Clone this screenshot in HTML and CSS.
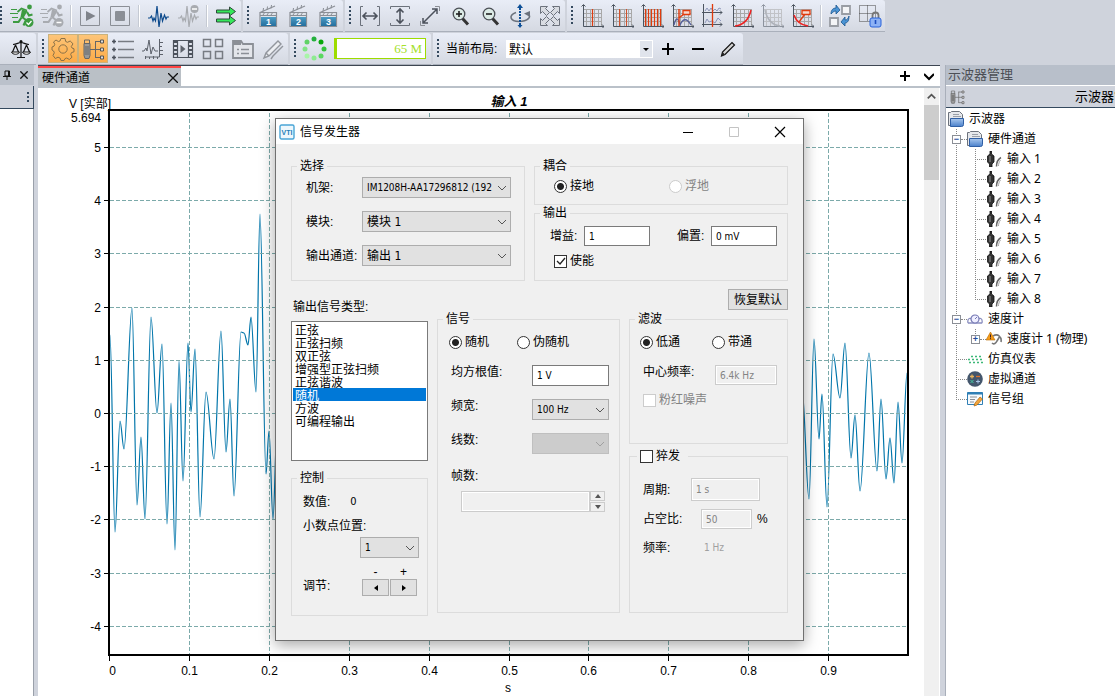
FILE: index.html
```html
<!DOCTYPE html>
<html lang="zh-CN">
<head>
<meta charset="utf-8">
<title>信号发生器</title>
<link rel="stylesheet" href="styles.css">
</head>
<body>
<svg class="sprite" aria-hidden="true">
  <defs>
    <linearGradient id="blue" x2="0" y2="1"><stop offset="0" stop-color="#4d9cc4"/><stop offset="1" stop-color="#246f9e"/></linearGradient>
    <linearGradient id="folder" x2="0" y2="1"><stop offset="0" stop-color="#a9c8ee"/><stop offset="1" stop-color="#4a80cb"/></linearGradient>
  </defs>
  <symbol id="i-runner" viewBox="0 0 24 24">
    <circle cx="19.500" cy="3" r="2.400" fill="currentColor"/>
    <path d="M17 6.500l-5.500-2-4 3.500" fill="none" stroke="currentColor" stroke-width="1.800"/>
    <path d="M12 5.500l5.500 1.500-4 7-3-1z" fill="currentColor"/>
    <path d="M17 8l2 3.500 3.500-1M12 13l4 3-2.500 5.500M11.500 13.500l-3 4.500H3" fill="none" stroke="currentColor" stroke-width="2.100"/>
    <path d="M1 5.500h6M0 9.500h8M2 13.500h6" stroke="currentColor"/>
  </symbol>
  <symbol id="i-run" viewBox="0 0 24 24"><use href="#i-runner"/><circle cx="19" cy="18.500" r="4.500" fill="#3d9b41"/><path d="M16.500 18.500l2 2 3-3.500" stroke="#fff" fill="none" stroke-width="1.300"/></symbol>
  <symbol id="i-norun" viewBox="0 0 24 24"><use href="#i-runner"/><circle cx="19" cy="18.500" r="4.500" fill="#a8abb0"/><path d="M16.500 18.500h5" stroke="#fff" stroke-width="1.500"/></symbol>
  <symbol id="i-play" viewBox="0 0 24 24"><path d="M2.500 2.500h19v19h-19z" fill="none" stroke="#8b8f96"/><path d="M8 7l9.500 5L8 17z" fill="#7f838a"/></symbol>
  <symbol id="i-stop" viewBox="0 0 24 24"><path d="M2.500 2.500h19v19h-19z" fill="none" stroke="#8b8f96"/><rect x="7" y="7" width="10" height="10" rx="1" fill="#8b8f96"/></symbol>
  <symbol id="i-wave" viewBox="0 0 24 24"><path d="M2 14h2l1.500-2 1.500 5 1-3 1.500 3L11 2l2 21 2-14 1.500 8 2-6 1.500 4 1-2H23" fill="none" stroke="currentColor" stroke-width="1.200"/></symbol>
  <symbol id="i-nowave" viewBox="0 0 24 24"><use href="#i-wave"/><circle cx="18.500" cy="5" r="4" fill="#a8abb0"/><path d="M16 5h5" stroke="#fff" stroke-width="1.500"/></symbol>
  <symbol id="i-arrows" viewBox="0 0 24 24"><path d="M2.500 6h13V3l6 4.500-6 4.500V9h-13zM2.500 15h13v-3l6 4.500-6 4.500v-3h-13z" fill="#35e85a" stroke="#2f4a3a"/></symbol>
  <symbol id="i-clap" viewBox="0 0 24 24"><path d="M4 8.500L19 2" stroke="#8b8f96" stroke-width="1.200"/><path d="M4 8.500v14h16.500v-14z" fill="#dfe3ea" stroke="#8b8f96" stroke-width="1.200"/><path d="M4 11.500h16M7 11l2-3M11 11l2-3M15 11l2-3M7 7.500L7.500 4M11 6l.5-3.500M15 4.500l.5-3.500" stroke="#8b8f96"/><rect x="5" y="13" width="15" height="9" fill="url(#blue)"/></symbol>
  <symbol id="i-fith" viewBox="0 0 24 24"><path d="M5 2.500H2.500v19H5M19 2.500h2.500v19H19" fill="none" stroke="#6c727c"/><path d="M5 12h14M8.500 8.500L5 12l3.500 3.500M15.500 8.500L19 12l-3.500 3.500" fill="none" stroke="#4c525c" stroke-width="1.600"/></symbol>
  <symbol id="i-fitv" viewBox="0 0 24 24"><path d="M2.500 5V2.500h19V5M2.500 19v2.500h19V19" fill="none" stroke="#6c727c"/><path d="M12 5v14M8.500 8.500L12 5l3.500 3.500M8.500 15.500L12 19l3.500-3.500" fill="none" stroke="#4c525c" stroke-width="1.600"/></symbol>
  <symbol id="i-fitd" viewBox="0 0 24 24"><path d="M17 2.500h4.500V7M2.500 17v4.500H7" fill="none" stroke="#8b8f96"/><path d="M5 19L19 5M14 5h5v5M5 14v5h5" fill="none" stroke="#4c525c" stroke-width="1.500"/></symbol>
  <symbol id="i-lens" viewBox="0 0 24 24"><path d="M14.500 14.500l5.500 6" stroke="#333" stroke-width="3"/><circle cx="11" cy="10" r="5.800" fill="#dcebe6" stroke="#4b4f55" stroke-width="1.300"/><path d="M8 10h6" stroke="#222" stroke-width="1.600"/></symbol>
  <symbol id="i-lensplus" viewBox="0 0 24 24"><use href="#i-lens"/><path d="M11 7v6" stroke="#222" stroke-width="1.600"/></symbol>
  <symbol id="i-rot" viewBox="0 0 24 24"><path d="M8 8.500C0 11 2 17.500 11 17.500s13-5 9-7.500" fill="none" stroke="#6c727c" stroke-width="1.600"/><path d="M22 7v6l-6-3.500z" fill="#6c727c"/><path d="M12 4v17" stroke="#0d4f97" stroke-width="2" stroke-dasharray="2 1"/><path d="M9 4l3-4 3 4zM9.500 21h5L12 24z" fill="#0d4f97"/></symbol>
  <symbol id="i-full" viewBox="0 0 24 24"><path d="M2.500 2.500h7l-2 2 4 4-3 3-4-4-2 2zM21.500 2.500h-7l2 2-4 4 3 3 4-4 2 2zM2.500 21.500h7l-2-2 4-4-3-3-4 4-2-2zM21.500 21.500h-7l2-2-4-4 3-3 4 4 2-2z" fill="#d9dce2" stroke="#6c727c"/></symbol>
  <symbol id="i-grid" viewBox="0 0 24 24"><path d="M4 5.500h18M4 9.500h18M4 13.500h18M4 17.500h18M6.500 5v17M10.500 5v17M14.500 5v17M18.500 5v17M21.500 5v17" stroke="#a8a8a8"/><path d="M3.500 1v21.500H24M1.500 2.500l2-2 2 2M22 20.500l2 2-2 2" fill="none" stroke="#4c5560"/></symbol>
  <symbol id="i-g1" viewBox="0 0 24 24"><use href="#i-grid"/><path d="M12.500 5v17" stroke="#e03b0d" stroke-width="1.200"/></symbol>
  <symbol id="i-g2" viewBox="0 0 24 24"><use href="#i-grid"/><path d="M9.500 5v17M16.500 5v17" stroke="#d0522c"/></symbol>
  <symbol id="i-g3" viewBox="0 0 24 24"><use href="#i-grid"/><path d="M5.500 5v17M8.500 5v17M11.500 5v17M14.500 5v17M17.500 5v17M20.500 5v17" stroke="#e03b0d" stroke-width="1.200"/></symbol>
  <symbol id="i-g4" viewBox="0 0 24 24"><use href="#i-grid"/><path d="M4 21c2-8 4-8 6 0 3-7 7-7 11 0" fill="none" stroke="#55609a" stroke-width="1.300"/><path d="M9 5v17M9 14l5-4" stroke="#e03b0d" stroke-width="1.400"/><path d="M13 6.500h7v4h-7z" fill="#f7d9ce" stroke="#e03b0d" stroke-width="1.300"/></symbol>
  <symbol id="i-g5" viewBox="0 0 24 24"><path d="M3.500 0v23M2 8.500h20M2 20.500h20M20 6.500l2 2-2 2M20 18.500l2 2-2 2" stroke="#4c5560" fill="none"/><path d="M5 7l2-3 2 3 2-3 2 3 2-2 2 2 2-3 2 1M5 19l2-4 2 3 3-1 3 2 3-5 3 3" fill="none" stroke="#8f98bb"/><path d="M12.500 0v23" stroke="#e03b0d" stroke-width="1.300"/></symbol>
  <symbol id="i-g6" viewBox="0 0 24 24"><use href="#i-grid"/><path d="M5 22C14 21 19 15 21 6" fill="none" stroke="#ee2222" stroke-width="1.500"/></symbol>
  <symbol id="i-g7" viewBox="0 0 24 24"><g opacity=".55"><use href="#i-grid"/><path d="M5 6c2 9 7 15 15 16" fill="none" stroke="#8b8f96" stroke-width="1.500"/></g></symbol>
  <symbol id="i-g8" viewBox="0 0 24 24"><use href="#i-grid"/><path d="M4 11c2 6 7 10 14 11" fill="none" stroke="#ee2222" stroke-width="1.500"/><path d="M9 18l6-8" stroke="#e03b0d" stroke-width="1.300"/><path d="M12 6.500h8v4h-8z" fill="#f7d9ce" stroke="#e03b0d" stroke-width="1.300"/></symbol>
  <symbol id="i-swap" viewBox="0 0 24 24"><path d="M14 2h8v8h-8zM2 14h8v8H2z" fill="#f4f5f7" stroke="#999da4" stroke-width="1.800"/><path d="M3 10c0-4 2-6 5-6V1l4 5-4 4V7c-2 0-3 1-5 3zM21 12c0 4-1 7-4 7v3l-4-4 4-5v3c2 0 3-1 4-4z" fill="#4b94d4" stroke="#1b568f" stroke-width=".8"/></symbol>
  <symbol id="i-lock" viewBox="0 0 24 24"><path d="M1.500 1.500h16v16h-16zM9.500 1.500v16M1.500 9.500h16" fill="none" stroke="#444" stroke-dasharray="1 1"/><path d="M14.500 14v-2.500c0-4 6-4 6 0V14" fill="none" stroke="#777" stroke-width="1.800"/><rect x="12" y="14" width="11" height="9" rx="2" fill="#8db2f5" stroke="#2962d9"/><path d="M17.500 16v4" stroke="#1c4dc0" stroke-width="1.600"/></symbol>
  <symbol id="i-scale" viewBox="0 0 24 24"><path d="M12 4v16M4 7.500c4 0 5-2 8-2s4 2 8 2M8 20.500h8M6.500 8l-3 7M6.500 8l3 7M17.500 8l-3 7M17.500 8l3 7" fill="none" stroke="#111" stroke-width="1.200"/><path d="M2.500 15h8c-1 3-7 3-8 0zM13.500 15h8c-1 3-7 3-8 0z" fill="#fff" stroke="#111"/><circle cx="12" cy="4.500" r="1.500" fill="#111"/></symbol>
  <symbol id="i-gear" viewBox="0 0 24 24"><path d="M10 1.500h4l.7 3 1.800.8L19.200 4 22 6.800l-1.700 2.700.7 1.500 2 .8v3l-2.500.8-.8 2 1.300 2.600-2.600 2.300-2.700-1.500-1.700.6-1 1.900h-3l-1-2.500-2-.8-2.700 1.300L2 18.500l1.300-2.700L2.600 14 1 13v-3l2-.8.8-1.900L2.500 5 5 3l2.300 1.500L9 4z" fill="none" stroke="#8a7148"/><circle cx="12" cy="12" r="4.200" fill="none" stroke="#8a7148"/></symbol>
  <symbol id="i-plug" viewBox="0 0 24 24"><path d="M3 6.500h6v12l-1 3H4l-1-3z" fill="#9a9a9a" stroke="#666"/><path d="M3.500 3h5v3.500M3.500 3v3.500M5 9v9M7 9v9" stroke="#666" fill="none"/><path d="M9 12.500h11M14.500 4v17M14.500 4.500H20M14.500 20.500H20" fill="none" stroke="#666"/><path d="M19.500 3h3v3h-3zM19.500 11h3v3h-3zM19.500 19h3v3h-3z" fill="#ddd" stroke="#555"/></symbol>
  <symbol id="i-list" viewBox="0 0 24 24"><path d="M7 4.500h16M7 12.500h16M7 20.500h16" stroke="#777b82" stroke-width="1.300"/><path d="M3 2.500v4M1 4.500h4M3 10.500v4M1 12.500h4M3 18.500v4M1 20.500h4" stroke="#4c525c" stroke-width="1.600"/></symbol>
  <symbol id="i-spec" viewBox="0 0 24 24"><path d="M1 14h2l2-3 1 3 2-11 2 14 2-7 2 4h3M18.500 2v18H4M18 5.500h4M18 9.500h3M18 13.500h4M18 17.500h4M4.500 22v-3M8.500 22v-2M12.500 22v-3M16.500 22v-2" fill="none" stroke="#5d626b"/></symbol>
  <symbol id="i-film" viewBox="0 0 24 24"><path d="M2.500 3.500h19v17h-19zM6.500 3.500v17M17.500 3.500v17" fill="none" stroke="#4c525c" stroke-width="1.200"/><path d="M4.500 4v16M19.500 4v16" stroke="#4c525c" stroke-width="3" stroke-dasharray="2 2"/><path d="M9.500 8l5 4-5 4z" fill="#5d626b"/></symbol>
  <symbol id="i-tiles" viewBox="0 0 24 24"><path d="M2.500 2.500h7v7h-7zM14.500 2.500h7v7h-7zM2.500 14.500h7v7h-7zM14.500 14.500h7v7h-7z" fill="none" stroke="#777b82" stroke-width="1.500"/></symbol>
  <symbol id="i-card" viewBox="0 0 24 24"><path d="M2 21V4h8l2 3h10v14z" fill="#e3e5ea" stroke="#8b8f96" stroke-width="1.800"/><path d="M2 5h8v3H2z" fill="#8b8f96"/><path d="M6 12.500h2M10 12.500h8M6 16.500h2M10 16.500h8" stroke="#8b8f96" stroke-width="1.600"/></symbol>
  <symbol id="i-pens" viewBox="0 0 24 24"><path d="M3 21l2-5L17 4l3 3L8 19zM10 22l2-3L22 9M5 16l3 3" fill="#eceef2" stroke="#92969d" stroke-width="1.400"/></symbol>
  <symbol id="i-pencil" viewBox="0 0 24 24"><path d="M5.500 19L6.500 15 16 5.500l2.500 2.500L9 17.500z" fill="#d4d4d4" stroke="#111" stroke-width="1.200"/><path d="M5.500 19l1-4 2.500 2.500z" fill="#222"/></symbol>
  <symbol id="i-plus" viewBox="0 0 24 24"><path d="M6 12h12M12 6v12" stroke="#000" stroke-width="2"/></symbol>
  <symbol id="i-minus" viewBox="0 0 24 24"><path d="M6 12h12" stroke="#000" stroke-width="2"/></symbol>
  <symbol id="i-close" viewBox="0 0 24 24"><path d="M1 1l22 22M23 1L1 23" stroke="#111" stroke-width="4"/></symbol>
  <symbol id="i-folder" viewBox="0 0 16 16"><path d="M.5 14.500v-13h2l1-1h8l3 3v11z" fill="#e6e8ec" stroke="#6c727c"/><path d="M5 3.500h6M5 5.500h8" stroke="#9a9fa8"/><path d="M2.500 7.500h13v6q0 2-2 2h-11z" fill="url(#folder)" stroke="#2f5fa5"/></symbol>
  <symbol id="i-jack" viewBox="0 0 16 16"><path d="M4 0h1.500v3L8 5v6l-2 2v3H3.500v-3L1.500 11V5L4 3z" fill="#333" stroke="#111" stroke-width=".8"/><path d="M4 5v6" stroke="#aaa" stroke-width=".8"/><path d="M10.500 15.500c0-4 1-7 4.500-9" fill="none" stroke="#666" stroke-width="1.500"/><path d="M12.500 15c0-2 .5-4 2-6" fill="none" stroke="#aaa"/></symbol>
  <symbol id="i-tachos" viewBox="0 0 16 16"><path d="M1 12c-1-5 3-6 4-3M15 12c1-5-3-6-4-3M1 12h14" fill="none" stroke="#8b8fc0" stroke-width="1.300"/><circle cx="8" cy="8" r="4" fill="#eef" stroke="#7478b3" stroke-width="1.200"/><path d="M8 8l2-2" stroke="#7478b3"/></symbol>
  <symbol id="i-tacho" viewBox="0 0 16 16"><path d="M7 5c5-3 9 1 8 6M6 12c2 2 4 0 5-2l3-5" fill="none" stroke="#777" stroke-width="1.600"/><path d="M4.500 1L9 9H0z" fill="#f59b19" stroke="#b86b00" stroke-width=".6"/><path d="M4.500 3.500v3M4.500 7.200v1" stroke="#422"/></symbol>
  <symbol id="i-dots" viewBox="0 0 16 16"><path d="M4 5.500h12M1 8.500h15M2 11.500h14" stroke="#3cb878" stroke-width="1.500" stroke-dasharray="2 2"/></symbol>
  <symbol id="i-virt" viewBox="0 0 16 16"><circle cx="8" cy="8" r="7.800" fill="#44566c"/><path d="M3 5.500h4M5 3.500v4" stroke="#e8b35c" stroke-width="1.300"/><path d="M9 5.500h4" stroke="#e0702d" stroke-width="1.300"/><path d="M3.500 9l3 3M6.500 9l-3 3" stroke="#45c3a0"/><path d="M9 10.500h4M11 8.500v4" stroke="#a8c5e8"/></symbol>
  <symbol id="i-group" viewBox="0 0 16 16"><path d="M.5 1.500h15v12H.5z" fill="#f6fafd" stroke="#2f7fb5"/><path d="M.5 2.500h15" stroke="#2f7fb5" stroke-width="2"/><path d="M3 6h7M3 8.500h5M3 11h4" stroke="#8b8f96"/><path d="M7 15l1-3 5-6 2.500 2-5.500 6z" fill="#f3a53b" stroke="#a86612" stroke-width=".7"/></symbol>
</svg>

<header class="bars">
  <div class="bar-row">
    <div class="toolbar">
      <span class="grip grip-edge"></span>
      <button class="tool green" aria-label="运行"><svg><use href="#i-run"/></svg></button>
      <button class="tool dim" aria-label="停止运行"><svg><use href="#i-norun"/></svg></button>
      <span class="sep"></span>
      <button class="tool" aria-label="播放"><svg><use href="#i-play"/></svg></button>
      <button class="tool" aria-label="停止"><svg><use href="#i-stop"/></svg></button>
      <span class="sep"></span>
      <button class="tool navy" aria-label="信号"><svg><use href="#i-wave"/></svg></button>
      <button class="tool dim" aria-label="关闭信号"><svg><use href="#i-nowave"/></svg></button>
      <span class="sep"></span>
      <button class="tool" aria-label="继续"><svg><use href="#i-arrows"/></svg></button>
    </div>
    <div class="toolbar">
      <span class="grip"></span>
      <button class="tool" aria-label="场景 1"><svg viewBox="0 0 24 24"><use href="#i-clap"/><text x="12.500" y="21" class="clap-num">1</text></svg></button>
      <button class="tool" aria-label="场景 2"><svg viewBox="0 0 24 24"><use href="#i-clap"/><text x="12.500" y="21" class="clap-num">2</text></svg></button>
      <button class="tool" aria-label="场景 3"><svg viewBox="0 0 24 24"><use href="#i-clap"/><text x="12.500" y="21" class="clap-num">3</text></svg></button>
    </div>
    <div class="toolbar">
      <span class="grip"></span>
      <button class="tool" aria-label="水平适应"><svg><use href="#i-fith"/></svg></button>
      <button class="tool" aria-label="垂直适应"><svg><use href="#i-fitv"/></svg></button>
      <button class="tool" aria-label="全部适应"><svg><use href="#i-fitd"/></svg></button>
      <button class="tool" aria-label="放大"><svg><use href="#i-lensplus"/></svg></button>
      <button class="tool" aria-label="缩小"><svg><use href="#i-lens"/></svg></button>
      <button class="tool" aria-label="旋转"><svg><use href="#i-rot"/></svg></button>
      <button class="tool" aria-label="全屏"><svg><use href="#i-full"/></svg></button>
    </div>
    <div class="toolbar">
      <span class="grip"></span>
      <button class="tool" aria-label="单光标"><svg><use href="#i-g1"/></svg></button>
      <button class="tool" aria-label="双光标"><svg><use href="#i-g2"/></svg></button>
      <button class="tool" aria-label="谐波光标"><svg><use href="#i-g3"/></svg></button>
      <button class="tool" aria-label="峰值光标"><svg><use href="#i-g4"/></svg></button>
      <button class="tool" aria-label="联动光标"><svg><use href="#i-g5"/></svg></button>
      <button class="tool" aria-label="曲线"><svg><use href="#i-g6"/></svg></button>
      <button class="tool" aria-label="隐藏曲线"><svg><use href="#i-g7"/></svg></button>
      <button class="tool" aria-label="曲线标签"><svg><use href="#i-g8"/></svg></button>
      <span class="sep"></span>
      <button class="tool" aria-label="交换"><svg><use href="#i-swap"/></svg></button>
      <button class="tool" aria-label="锁定"><svg><use href="#i-lock"/></svg></button>
    </div>
  </div>
  <div class="bar-row">
    <div class="toolbar toolbar-start">
      <button class="tool" aria-label="平衡"><svg><use href="#i-scale"/></svg></button>
    </div>
    <div class="toolbar">
      <span class="grip"></span>
      <button class="tool on" aria-label="设置"><svg><use href="#i-gear"/></svg></button>
      <button class="tool on" aria-label="通道"><svg><use href="#i-plug"/></svg></button>
      <button class="tool" aria-label="列表"><svg><use href="#i-list"/></svg></button>
      <button class="tool" aria-label="频谱"><svg><use href="#i-spec"/></svg></button>
      <button class="tool" aria-label="回放"><svg><use href="#i-film"/></svg></button>
      <button class="tool" aria-label="平铺"><svg><use href="#i-tiles"/></svg></button>
      <button class="tool" aria-label="报告"><svg><use href="#i-card"/></svg></button>
      <button class="tool" aria-label="标注"><svg><use href="#i-pens"/></svg></button>
    </div>
    <div class="toolbar">
      <span class="grip"></span>
      <svg class="spinner" viewBox="0 0 28 28">
        <circle cx="14" cy="4" r="2.500" fill="#24b13e"/><circle cx="21" cy="7" r="2.500" fill="#09a70b"/>
        <circle cx="24" cy="14" r="2.500" fill="#35c43d"/><circle cx="21" cy="21" r="2.500" fill="#5ad860"/>
        <circle cx="14" cy="23" r="2.500" fill="#8deb90"/><circle cx="7" cy="21" r="2.500" fill="#a8f5a8"/>
        <circle cx="5" cy="14" r="2.500" fill="#82e486"/><circle cx="7" cy="7" r="2.500" fill="#60d266"/>
      </svg>
      <div class="memory">65 M</div>
    </div>
    <div class="toolbar">
      <span class="grip"></span>
      <label class="layout-label" for="layout">当前布局:</label>
      <select class="layout-select" id="layout"><option>默认</option></select>
      <button class="tool" aria-label="添加布局"><svg><use href="#i-plus"/></svg></button>
      <button class="tool" aria-label="删除布局"><svg><use href="#i-minus"/></svg></button>
      <button class="tool" aria-label="编辑布局"><svg><use href="#i-pencil"/></svg></button>
    </div>
  </div>
</header>

<main class="work">
  <aside class="side">
    <div class="side-head">
      <svg class="pin" viewBox="0 0 8 10"><path d="M2 1h4.500v5H2zM0 6.500h8M4 6v4M5.500 1v5" fill="none" stroke="#111"/></svg>
      <button class="bare" aria-label="关闭面板"><svg class="x8"><use href="#i-close"/></svg></button>
    </div>
    <div class="side-row"><span class="grip"></span></div>
    <div class="side-body"></div>
  </aside>

  <section class="centre">
    <div class="tabs">
      <div class="tab"><span>硬件通道</span><button class="bare" aria-label="关闭标签"><svg class="x10" viewBox="0 0 10 10"><path d="M0 0l10 10M10 0L0 10" stroke="#111" stroke-width="1.300"/></svg></button></div>
      <div class="tab-tools">
        <button class="bare" aria-label="新标签"><svg class="x10" viewBox="0 0 10 10"><path d="M0 5h10M5 0v10" stroke="#000" stroke-width="2"/></svg></button>
        <button class="bare" aria-label="标签列表"><svg class="x10" viewBox="0 0 10 10"><path d="M0 3l5 5 5-5" fill="none" stroke="#000" stroke-width="2"/></svg></button>
      </div>
    </div>
    <div class="view">
      <svg class="chart" viewBox="0 0 886 608" preserveAspectRatio="xMinYMin meet" id="chart">
        <text class="chart-title" x="471" y="18">输入 1</text>
        <text class="axis-label start" x="31" y="20">V [实部]</text>
        <text class="axis-label end" x="63" y="34">5.694</text>
        <text class="axis-label" x="470" y="604">s</text>
        <path class="trace" id="trace"/>
        <g id="grid"></g>
        <path class="frame" d="M71 22H870V567H71z"/>
      </svg>
      <div class="scroll">
        <svg viewBox="0 0 16 16"><path d="M4 10l4-4 4 4" fill="none" stroke="#555" stroke-width="1.800"/></svg>
        <div class="thumb"></div>
      </div>
    </div>
  </section>

  <aside class="manager">
    <h2>示波器管理</h2>
    <div class="manager-row"><svg><use href="#i-plug"/></svg><span>示波器管理</span></div>
    <div class="tree">
      <div class="node"><svg><use href="#i-folder"/></svg>示波器</div>
      <ul>
        <li><div class="node"><button class="exp" aria-label="折叠">−</button><i class="stem short"></i><svg><use href="#i-folder"/></svg>硬件通道</div>
          <ul>
            <li><div class="node"><i class="stem"></i><svg><use href="#i-jack"/></svg>输入 1</div></li>
            <li><div class="node"><i class="stem"></i><svg><use href="#i-jack"/></svg>输入 2</div></li>
            <li><div class="node"><i class="stem"></i><svg><use href="#i-jack"/></svg>输入 3</div></li>
            <li><div class="node"><i class="stem"></i><svg><use href="#i-jack"/></svg>输入 4</div></li>
            <li><div class="node"><i class="stem"></i><svg><use href="#i-jack"/></svg>输入 5</div></li>
            <li><div class="node"><i class="stem"></i><svg><use href="#i-jack"/></svg>输入 6</div></li>
            <li><div class="node"><i class="stem"></i><svg><use href="#i-jack"/></svg>输入 7</div></li>
            <li><div class="node"><i class="stem"></i><svg><use href="#i-jack"/></svg>输入 8</div></li>
          </ul>
        </li>
        <li><div class="node"><button class="exp" aria-label="折叠">−</button><i class="stem short"></i><svg><use href="#i-tachos"/></svg>速度计</div>
          <ul>
            <li><div class="node"><button class="exp" aria-label="展开">+</button><i class="stem short"></i><svg><use href="#i-tacho"/></svg>速度计 1 (物理)</div></li>
          </ul>
        </li>
        <li><div class="node"><i class="stem"></i><svg><use href="#i-dots"/></svg>仿真仪表</div></li>
        <li><div class="node"><i class="stem"></i><svg><use href="#i-virt"/></svg>虚拟通道</div></li>
        <li><div class="node"><i class="stem"></i><svg><use href="#i-group"/></svg>信号组</div></li>
      </ul>
    </div>
  </aside>
</main>

<section class="dialog" role="dialog" aria-labelledby="dialog-title">
  <div class="titlebar">
    <svg class="logo" viewBox="0 0 16 16"><rect x="1" y="1" width="14" height="14" rx="1.500" fill="#eef7fc" stroke="#49a5d6" stroke-width="1.400"/><text x="8" y="10.500">VTI</text></svg>
    <span id="dialog-title">信号发生器</span>
    <div class="win">
      <button class="bare" aria-label="最小化"><svg viewBox="0 0 12 12"><path d="M1 6.500h10" stroke="#000"/></svg></button>
      <button class="bare" aria-label="最大化" disabled><svg viewBox="0 0 12 12"><path d="M1.500 1.500h9v9h-9z" fill="none" stroke="#c4c4c4"/></svg></button>
      <button class="bare" aria-label="关闭"><svg viewBox="0 0 12 12"><path d="M1 1l10 10M11 1L1 11" stroke="#000" stroke-width="1.200"/></svg></button>
    </div>
  </div>
  <form class="form">
    <div class="upper">
      <fieldset class="pick">
        <legend>选择</legend>
        <label for="rack">机架:</label><select id="rack"><option>IM1208H-AA17296812 (192.168.0.1)</option></select>
        <label for="module">模块:</label><select class="cjk" id="module"><option>模块 1</option></select>
        <label for="out">输出通道:</label><select class="cjk" id="out"><option>输出 1</option></select>
      </fieldset>
      <div class="stack">
        <fieldset class="coupling">
          <legend>耦合</legend>
          <label class="tick"><input type="radio" name="couple" checked>接地</label>
          <label class="tick off"><input type="radio" name="couple" disabled>浮地</label>
        </fieldset>
        <fieldset class="output">
          <legend>输出</legend>
          <div class="pair">
            <label for="gain">增益:</label><input id="gain" type="text" value="1">
            <label class="second" for="offset">偏置:</label><input id="offset" type="text" value="0 mV">
          </div>
          <label class="tick"><input type="checkbox" checked>使能</label>
        </fieldset>
      </div>
    </div>
    <div class="lower">
      <div class="col-types">
        <label for="types">输出信号类型:</label>
        <select id="types" size="8">
          <option>正弦</option><option>正弦扫频</option><option>双正弦</option><option>增强型正弦扫频</option><option>正弦谐波</option><option selected>随机</option><option>方波</option><option>可编程输出</option>
        </select>
        <fieldset class="control">
          <legend>控制</legend>
          <div class="value"><span>数值:</span><output>0</output></div>
          <label for="decimal">小数点位置:</label>
          <select id="decimal"><option>1</option></select>
          <div class="adjust">
            <span class="sign">-</span><span class="sign">+</span>
            <span class="adjust-label">调节:</span>
            <button type="button" class="push" aria-label="减小"><svg viewBox="0 0 6 6"><path d="M5 0v6L1 3z"/></svg></button>
            <button type="button" class="push" aria-label="增大"><svg viewBox="0 0 6 6"><path d="M1 0v6l4-3z"/></svg></button>
          </div>
        </fieldset>
      </div>
      <fieldset class="signal">
        <legend>信号</legend>
        <div class="radios"><label class="tick"><input type="radio" name="sig" checked>随机</label><label class="tick"><input type="radio" name="sig">伪随机</label></div>
        <div class="rows">
          <label for="rms">均方根值:</label><input id="rms" type="text" value="1 V">
          <label for="band">频宽:</label><select id="band"><option>100 Hz</option></select>
          <label for="lines">线数:</label><select id="lines" disabled><option></option></select>
        </div>
        <label class="frames-label" for="frames">帧数:</label>
        <div class="spin"><input id="frames" type="text" disabled><div class="spin-btns"><button type="button" disabled aria-label="增加"><svg viewBox="0 0 6 4"><path d="M0 4h6L3 0z"/></svg></button><button type="button" disabled aria-label="减少"><svg viewBox="0 0 6 4"><path d="M0 0h6L3 4z"/></svg></button></div></div>
      </fieldset>
      <div class="col-filter">
        <button type="button" class="push restore">恢复默认</button>
        <fieldset class="filter">
          <legend>滤波</legend>
          <div class="radios"><label class="tick"><input type="radio" name="flt" checked>低通</label><label class="tick"><input type="radio" name="flt">带通</label></div>
          <div class="line"><label for="centre">中心频率:</label><input id="centre" type="text" value="6.4k Hz" disabled></div>
          <label class="tick off pink"><input type="checkbox" disabled>粉红噪声</label>
        </fieldset>
        <fieldset class="burst">
          <legend><label class="tick"><input type="checkbox">猝发</label></legend>
          <div class="line period"><label for="period">周期:</label><input id="period" type="text" value="1 s" disabled></div>
          <div class="line duty"><label for="duty">占空比:</label><input id="duty" type="text" value="50" disabled><span>%</span></div>
          <div class="line freq"><span>频率:</span><output>1 Hz</output></div>
        </fieldset>
      </div>
    </div>
  </form>
</section>
<script src="chart.js"></script>
</body>
</html>
```

FILE: chart.js
```js
const NS = 'http://www.w3.org/2000/svg';
const grid = document.getElementById('grid');

function add(name, attrs, text) {
  const el = document.createElementNS(NS, name);
  for (const key in attrs) el.setAttribute(key, attrs[key]);
  if (text !== undefined) el.textContent = text;
  grid.appendChild(el);
}

for (let v = 5; v >= -4; v--) {
  const y = Math.round(325 - v * 53.2) + 0.5;
  add('path', { class: 'grid-line', d: `M72 ${y}H869` });
  add('path', { class: 'tick-line', d: `M66 ${y}h4` });
  add('text', { class: 'axis-label end', x: 63, y: y + 4 }, v);
}
for (let i = 0; i < 10; i++) {
  const x = Math.round(71 + i * 79.9) + 0.5;
  if (i) add('path', { class: 'grid-line', d: `M${x} 25V566` });
  add('path', { class: 'tick-line', d: `M${x} 568v5` });
  add('text', { class: 'axis-label', x: i ? x : x + 3, y: 587 }, i ? (i / 10).toFixed(1) : '0');
}

// Turning points of the sampled signal, in view coordinates.
const points = [
  [72, 247], [77, 444], [82, 333], [86, 361], [94, 220], [99, 417], [103, 349], [107, 431],
  [113, 229], [119, 325], [124, 256], [129, 436], [133, 315], [137, 462], [141, 273], [145, 393],
  [150, 255], [153, 324], [157, 261], [162, 429], [168, 304], [176, 371], [183, 243], [188, 364],
  [192, 311], [196, 408], [203, 244], [206, 245], [210, 257], [213, 229], [218, 304], [222, 126],
  [228, 386], [231, 343], [235, 431], [239, 340], [764, 300], [771, 411], [776, 251], [781, 351],
  [784, 306], [789, 419], [795, 266], [802, 310], [807, 255], [813, 370], [817, 327], [822, 403],
  [831, 265], [839, 383], [843, 311], [848, 391], [852, 350], [856, 395], [860, 314], [864, 375], [869, 285]
];
let d = `M${points[0]}`;
for (let i = 1; i < points.length; i++) {
  const [x0, y0] = points[i - 1];
  const [x1, y1] = points[i];
  const k = (x1 - x0) * 0.35;
  d += `C${x0 + k} ${y0} ${x1 - k} ${y1} ${x1} ${y1}`;
}
document.getElementById('trace').setAttribute('d', d);
```

FILE: styles.css
```css
* { box-sizing: border-box; }

body {
  margin: 0;
  height: 100vh;
  display: flex;
  flex-direction: column;
  overflow: hidden;
  background: #cfd3dc;
  color: #000;
  font: 12px/14px "Liberation Sans", "Noto Sans CJK SC", sans-serif;
}

button, input, select { font: inherit; color: inherit; margin: 0; }
ul { list-style: none; margin: 0; padding: 0; }
.sprite { position: absolute; width: 0; height: 0; }
.bare { border: 0; background: none; padding: 0; display: flex; }
.x8 { width: 8px; height: 8px; }
.x10 { width: 10px; height: 10px; }

/* toolbars */
.bars { display: flex; flex-direction: column; gap: 1px; height: 65px; flex: none; }
.bar-row { display: flex; gap: 2px; height: 32px; }
.toolbar {
  display: flex;
  align-items: center;
  background: linear-gradient(#e9edf7, #d5d9e2);
  border-bottom: 1px solid #aab0bb;
  border-radius: 0 3px 0 0;
  flex: none;
}
.toolbar-start { padding-left: 6px; }
.grip {
  flex: none;
  width: 10px;
  height: 19px;
  background: repeating-linear-gradient(#34495e 0 2px, transparent 2px 4px) 4px 0 / 2px 100% no-repeat;
}
.grip-edge { width: 7px; background-position: 0 0; }
.sep { width: 2px; height: 22px; margin: 0 3px; background: #fff; border-left: 1px solid #c5cad3; }
.tool {
  width: 30px;
  height: 29px;
  padding: 0;
  border: 1px solid transparent;
  background: none;
  display: flex;
  align-items: center;
  justify-content: center;
}
.tool svg { width: 24px; height: 24px; flex: none; }
.tool.on { background: linear-gradient(#fdc579, #fcab47); border-color: #c9b27d; }
.green { color: #3d9b41; }
.dim { color: #a8abb0; }
.navy { color: #0d4a8c; }
.clap-num { font: bold 9px "Liberation Sans", sans-serif; fill: #fff; text-anchor: middle; }
.spinner { width: 28px; height: 28px; }
.memory {
  width: 92px;
  height: 21px;
  margin: 0 5px 0 6px;
  padding-right: 3px;
  border: 1px solid #9ddc00;
  border-left-width: 3px;
  background: #fff;
  color: #a4e02a;
  font: 13px/19px "Liberation Serif", serif;
  text-align: right;
}
.layout-label { width: 60px; padding-left: 3px; }
.layout-select {
  appearance: none;
  width: 147px;
  height: 18px;
  margin-left: 3px;
  padding: 0 2px;
  border: 1px solid #fff;
  background: url("data:image/svg+xml,%3Csvg xmlns='http://www.w3.org/2000/svg' width='12' height='16'%3E%3Cpath d='M0 0h12v16H0z' fill='%23e0e4ec'/%3E%3Cpath d='M3 7h6l-3 3z'/%3E%3C/svg%3E") right center no-repeat #fff;
}

/* workspace */
.work { flex: 1; display: flex; min-height: 0; }
.side { width: 34px; flex: none; display: flex; flex-direction: column; }
.side-head { height: 20px; display: flex; align-items: center; gap: 9px; padding-left: 3px; background: #bbc1cb; }
.pin { width: 8px; height: 10px; }
.side-row { height: 23px; margin-top: 1px; display: flex; align-items: center; justify-content: flex-end; border: solid #34495e; border-width: 0 1px 1px 0; background: #cfd3dc; }
.side-row .grip { height: 11px; }
.side-body { flex: 1; background: #fff; border-right: 1px solid #9aa0aa; }

.centre { flex: 1; min-width: 0; margin: 0 5px 0 4px; display: flex; flex-direction: column; background: #fff; }
.tabs { display: flex; justify-content: space-between; height: 23px; border-top: 1px solid #3d4652; border-bottom: 2px solid #bac1c9; }
.tab { width: 143px; display: flex; align-items: center; justify-content: space-between; padding: 2px 3px 0 4px; background: #bac0c6; border-top: 2px solid #ff4444; }
.tab-tools { display: flex; align-items: center; gap: 14px; padding-right: 6px; }
.view { flex: 1; display: flex; min-height: 0; }
.chart { flex: 1; min-width: 0; height: 100%; }
.scroll { width: 15px; flex: none; margin-right: 1px; background: #f0f0f0; }
.scroll svg { display: block; width: 15px; height: 17px; }
.thumb { height: 75px; background: #cdcdcd; }

.chart-title { font: italic bold 13px "Liberation Sans", "Noto Sans CJK SC", sans-serif; text-anchor: middle; }
.axis-label { font: 12px "Liberation Sans", "Noto Sans CJK SC", sans-serif; text-anchor: middle; }
.axis-label.start { text-anchor: start; }
.axis-label.end { text-anchor: end; }
.grid-line { stroke: #7caaaa; stroke-dasharray: 4 2; }
.tick-line { stroke: #000; }
.frame { fill: none; stroke: #000; stroke-width: 2; }
.trace { fill: none; stroke: #0075aa; stroke-width: 1.2; }

/* scope manager */
.manager { width: 170px; flex: none; display: flex; flex-direction: column; overflow: hidden; background: #fff; border-left: 1px solid #a9afba; }
.manager h2 { margin: 0; height: 21px; padding: 3px 2px; background: #b8bfca; border-bottom: 1px solid #fff; color: #4c4f55; font-size: 13px; font-weight: 400; line-height: 14px; }
.manager-row { height: 22px; display: flex; align-items: center; justify-content: space-between; gap: 110px; padding-left: 3px; background: #cfd3dc; border-bottom: 1px solid #34495e; font-size: 13px; white-space: nowrap; }
.manager-row svg { width: 16px; height: 16px; flex: none; }
.tree { padding: 1px 0 0 2px; font-family: "Noto Sans", "Noto Sans CJK SC", sans-serif; }
.tree ul {
  margin-left: 8px;
  background: repeating-linear-gradient(#888 0 1px, transparent 1px 2px) 0 0 / 1px calc(100% - 10px) no-repeat;
}
.tree ul ul { margin-left: 19px; }
.node { height: 20px; display: flex; align-items: center; white-space: nowrap; }
.node svg { width: 16px; height: 16px; margin-right: 5px; flex: none; }
.stem { width: 11px; border-top: 1px dotted #888; }
.stem.short { width: 6px; }
.exp { width: 9px; height: 9px; margin-left: -4px; padding: 0; border: 1px solid #8b8f96; background: #fff; color: #234b9b; font: bold 9px/7px "Liberation Sans", sans-serif; }

/* dialog */
.dialog {
  position: absolute;
  left: 275px;
  top: 118px;
  width: 529px;
  border: 1px solid #707070;
  background: #f0f0f0;
  box-shadow: 0 4px 14px rgba(0, 0, 0, .35);
}
.titlebar { height: 25px; display: flex; align-items: center; gap: 5px; padding-left: 3px; background: #fff; }
.logo { width: 16px; height: 16px; }
.logo text { font: bold 7px "Liberation Sans", sans-serif; fill: #1d7fb8; text-anchor: middle; }
.win { display: flex; margin-left: auto; }
.win .bare { width: 46px; height: 25px; align-items: center; justify-content: center; }
.win svg { width: 12px; height: 12px; }
.form { padding: 16px 15px 24px; }
.upper { display: flex; justify-content: space-between; }
.lower { display: flex; gap: 9px; margin-top: 8px; }

fieldset { --inset: 10px; margin: 0; min-width: 0; padding: 0 0 0 var(--inset); border: 1px solid #dcdcdc; }
legend { margin-left: calc(5px - var(--inset)); padding: 0 3px; line-height: 13px; }
input[type="text"], select {
  height: 21px;
  min-width: 0;
  padding: 0 4px;
  border: 1px solid #7a7a7a;
  border-radius: 0;
  background: #fff;
  font: 10px/14px "DejaVu Sans Condensed", "DejaVu Sans", sans-serif;
}
input[type="text"]:disabled { border-color: #ccc; background: #f0f0f0; box-shadow: inset 0 0 0 1px #fff; color: #838383; }
.form select:not([size]) {
  appearance: none;
  border-color: #adadad;
  padding-right: 18px;
  background: url("data:image/svg+xml,%3Csvg xmlns='http://www.w3.org/2000/svg' width='10' height='6'%3E%3Cpath d='M1 1l4 4 4-4' fill='none' stroke='%23555'/%3E%3C/svg%3E") right 3px center no-repeat #e1e1e1;
}
.form select:not([size]):disabled {
  border-color: #bfbfbf;
  background: url("data:image/svg+xml,%3Csvg xmlns='http://www.w3.org/2000/svg' width='10' height='6'%3E%3Cpath d='M1 1l4 4 4-4' fill='none' stroke='%23a0a0a0'/%3E%3C/svg%3E") right 3px center no-repeat #ccc;
  opacity: 1;
}
.form select.cjk { font: 12px/14px "DejaVu Sans Condensed", "Noto Sans CJK SC", sans-serif; }
.layout-select { font: 12px/14px "Noto Sans CJK SC", sans-serif; }
.tick { display: flex; align-items: center; gap: 3px; line-height: 13px; }
.tick.off { color: #838383; }
.tick input { appearance: none; width: 13px; height: 13px; border: 1px solid #333; background: #fff; flex: none; }
.tick input[type="radio"] { border-radius: 50%; }
.tick input[type="radio"]:checked { background: radial-gradient(circle, #222 0 3px, #fff 4px); }
.tick input[type="checkbox"]:checked { background: url("data:image/svg+xml,%3Csvg xmlns='http://www.w3.org/2000/svg' width='11' height='11'%3E%3Cpath d='M2 5l3 3 5-6' fill='none' stroke='%23222' stroke-width='1.3'/%3E%3C/svg%3E") #fff; }
.tick input:disabled { border-color: #ccc; }
.push { padding: 0; border: 1px solid #adadad; background: #e1e1e1; display: flex; align-items: center; justify-content: center; }
.push svg { width: 6px; height: 6px; }

.pick, .rows { display: grid; }
.pick { --inset: 14px; width: 234px; height: 121px; grid-template-columns: 56px 149px; grid-auto-rows: 21px; row-gap: 13px; padding-top: 4px; align-items: center; }
.stack { width: 254px; display: flex; flex-direction: column; gap: 2px; }
.coupling { --inset: 19px; height: 45px; display: grid; grid-template-columns: 115px 1fr; padding-top: 7px; align-items: start; }
.output { --inset: 15px; height: 74px; padding-top: 6px; }
.output .tick { margin: 9px 0 0 4px; }
.pair { display: flex; align-items: center; }
.pair label { width: 34px; }
.pair .second { margin-left: 27px; }
.pair input { width: 66px; height: 20px; }

.col-types { width: 137px; padding-top: 11px; }
.col-types > label { display: block; padding-left: 2px; }
#types { display: block; width: 100%; height: 140px; margin-top: 7px; padding: 1px; overflow: hidden; font: 12px/13px "Liberation Sans", "Noto Sans CJK SC", sans-serif; }
#types option { display: flex; align-items: center; height: 13px; min-height: 13px; padding: 0 2px; line-height: 13px; }
#types option:checked { background: #0078d7 linear-gradient(#0078d7, #0078d7); color: #fff; -webkit-text-fill-color: #fff; }
.control { --inset: 11px; height: 144px; margin-top: 11px; padding-top: 10px; }
.value { display: flex; gap: 20px; margin-bottom: 10px; }
.value output { font: 11px/14px "DejaVu Sans Condensed", sans-serif; }
.control > label { display: block; }
.control > select { display: block; width: 59px; margin: 4px 0 7px 57px; }
.adjust { display: grid; grid-template-columns: 58px 27px 27px; column-gap: 1px; align-items: start; }
.sign { text-align: center; line-height: 14px; }
.sign:first-child { grid-column: 2; }
.adjust .push { height: 17px; }

.signal { --inset: 11px; width: 183px; height: 300px; margin-top: 24px; padding-top: 10px; }
.radios { display: grid; grid-template-columns: 68px 1fr; }
.rows { grid-template-columns: 81px 77px; grid-auto-rows: 21px; row-gap: 13px; align-items: start; margin: 16px 0 15px 2px; }
.frames-label { display: block; margin-left: 2px; }
.spin { display: flex; margin: 8px 0 0 12px; }
.spin input { width: 129px; }
.spin-btns { display: flex; flex-direction: column; gap: 1px; }
.spin-btns button { width: 15px; height: 10px; padding: 0; border: 1px solid #ccc; background: #f0f0f0; display: flex; align-items: center; justify-content: center; }
.spin-btns svg { width: 6px; height: 4px; fill: #555; }

.col-filter { width: 159px; display: flex; flex-direction: column; }
.restore { width: 60px; height: 21px; align-self: flex-end; }
.filter { height: 131px; margin-top: 3px; padding-top: 10px; }
.filter .radios { grid-template-columns: 72px 1fr; }
.line { display: flex; align-items: center; padding-left: 3px; }
.filter .line { margin-top: 16px; align-items: flex-start; }
.filter .line label { width: 72px; }
.filter .line input { width: 62px; height: 20px; }
.pink { margin: 9px 0 0 3px; }
.burst { height: 163px; margin-top: 6px; padding-top: 15px; }
.burst legend { margin-left: -3px; padding-right: 8px; }
.period label { width: 48px; }
.period input { width: 69px; height: 23px; }
.duty { margin-top: 8px; }
.duty label { width: 58px; }
.duty input { width: 51px; height: 20px; }
.duty span { margin-left: 5px; }
.freq { margin-top: 12px; }
.freq span { width: 61px; }
.freq output { font: 10px/14px "DejaVu Sans Condensed", sans-serif; color: #a0a0a0; }
```
